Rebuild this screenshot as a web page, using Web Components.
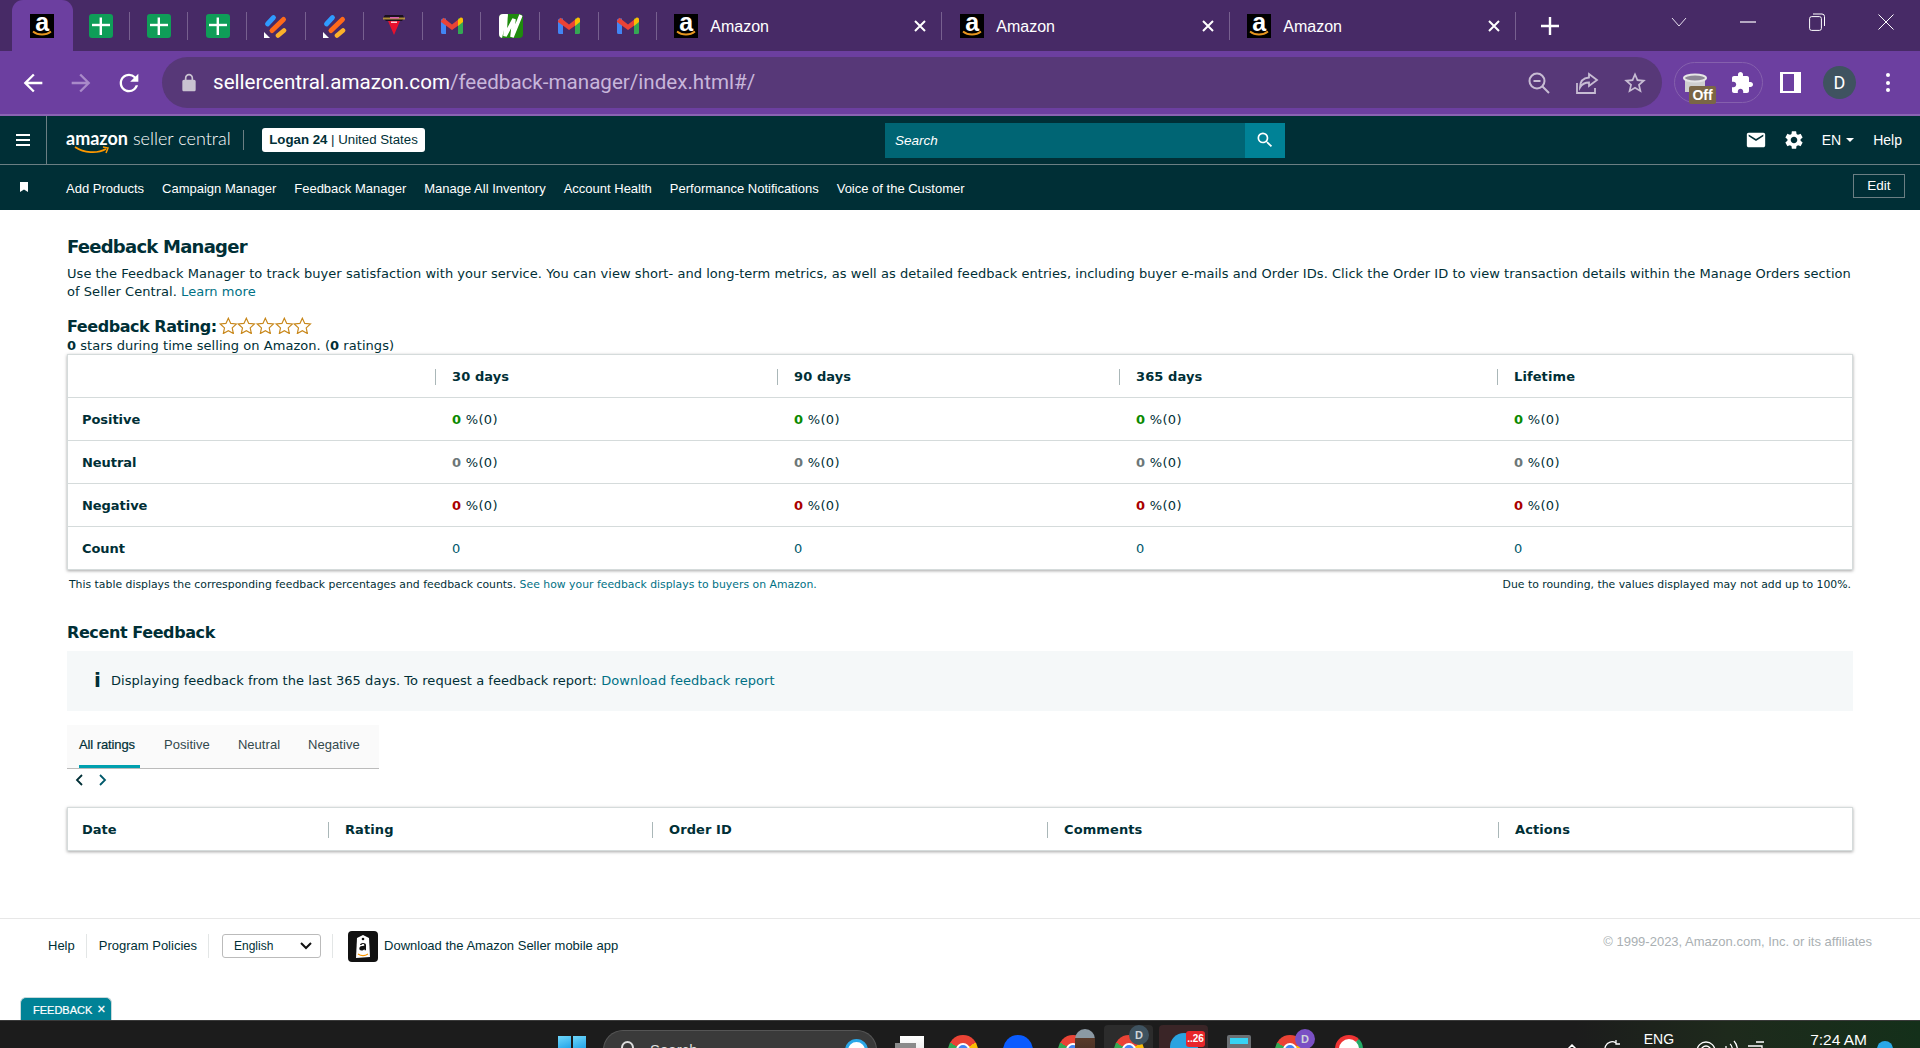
<!DOCTYPE html>
<html lang="en"><head><meta charset="utf-8"><title>Feedback Manager</title>
<style>
html,body{margin:0;padding:0;height:100%;overflow:hidden;background:#fff}
body{display:flex;flex-direction:column;width:1920px;height:1048px;font-family:"DejaVu Sans",sans-serif;color:#002f36}
</style></head><body>
<chrome-tabs></chrome-tabs>
<chrome-toolbar></chrome-toolbar>
<sc-header></sc-header>
<sc-nav></sc-nav>
<fb-page></fb-page>
<sc-footer></sc-footer>
<win-taskbar></win-taskbar>
<script>
const P={
 back:'M20 11H7.83l5.59-5.59L12 4l-8 8 8 8 1.41-1.41L7.83 13H20v-2z',
 reload:'M17.65 6.35A7.958 7.958 0 0 0 12 4c-4.42 0-7.99 3.58-7.99 8s3.57 8 7.99 8c3.73 0 6.84-2.55 7.73-6h-2.08A5.99 5.99 0 0 1 12 18c-3.31 0-6-2.69-6-6s2.69-6 6-6c1.66 0 3.14.69 4.22 1.78L13 11h7V4l-2.35 2.35z',
 lock:'M18 8h-1V6c0-2.76-2.24-5-5-5S7 3.24 7 6v2H6c-1.1 0-2 .9-2 2v10c0 1.1.9 2 2 2h12c1.1 0 2-.9 2-2V10c0-1.1-.9-2-2-2zM9 6c0-1.66 1.34-3 3-3s3 1.34 3 3v2H9V6z',
 puzzle:'M20.5 11H19V7c0-1.1-.9-2-2-2h-4V3.5C13 2.12 11.88 1 10.5 1S8 2.12 8 3.5V5H4c-1.1 0-1.99.9-1.99 2v3.8H3.5c1.49 0 2.7 1.21 2.7 2.7s-1.21 2.7-2.7 2.7H2V20c0 1.1.9 2 2 2h3.8v-1.5c0-1.49 1.21-2.7 2.7-2.7 1.49 0 2.7 1.21 2.7 2.7V22H17c1.1 0 2-.9 2-2v-4h1.5c1.38 0 2.5-1.12 2.5-2.5S21.88 11 20.5 11z',
 mail:'M20 4H4c-1.1 0-2 .9-2 2v12c0 1.1.9 2 2 2h16c1.1 0 2-.9 2-2V6c0-1.1-.9-2-2-2zm0 4l-8 5-8-5V6l8 5 8-5v2z',
 gear:'M19.14 12.94c.04-.3.06-.61.06-.94 0-.32-.02-.64-.07-.94l2.03-1.58a.49.49 0 0 0 .12-.61l-1.92-3.32a.488.488 0 0 0-.59-.22l-2.39.96c-.5-.38-1.03-.7-1.62-.94l-.36-2.54a.484.484 0 0 0-.48-.41h-3.84c-.24 0-.43.17-.47.41l-.36 2.54c-.59.24-1.13.57-1.62.94l-2.39-.96c-.22-.08-.47 0-.59.22L2.74 8.87c-.12.21-.08.47.12.61l2.03 1.58c-.05.3-.09.63-.09.94s.02.64.07.94l-2.03 1.58a.49.49 0 0 0-.12.61l1.92 3.32c.12.22.37.29.59.22l2.39-.96c.5.38 1.03.7 1.62.94l.36 2.54c.05.24.24.41.48.41h3.84c.24 0 .44-.17.47-.41l.36-2.54c.59-.24 1.13-.56 1.62-.94l2.39.96c.22.08.47 0 .59-.22l1.92-3.32c.12-.22.07-.47-.12-.61l-2.01-1.58zM12 15.6c-1.98 0-3.6-1.62-3.6-3.6s1.62-3.6 3.6-3.6 3.6 1.62 3.6 3.6-1.62 3.6-3.6 3.6z',
 search:'M15.5 14h-.79l-.28-.27A6.471 6.471 0 0 0 16 9.5 6.5 6.5 0 1 0 9.5 16c1.61 0 3.09-.59 4.23-1.57l.27.28v.79l5 4.99L20.49 19l-4.99-5zm-6 0C7.01 14 5 11.99 5 9.5S7.01 5 9.5 5 14 7.01 14 9.5 11.99 14 9.5 14z',
 star:'M22 9.24l-7.19-.62L12 2 9.19 8.63 2 9.24l5.46 4.73L5.82 21 12 17.27 18.18 21l-1.63-7.03L22 9.24zM12 15.4l-3.76 2.27 1-4.28-3.32-2.88 4.38-.38L12 6.1l1.71 4.04 4.38.38-3.32 2.88 1 4.28L12 15.4z'
};
const ic=(d,s,c,extra='')=>`<svg width="${s}" height="${s}" viewBox="0 0 24 24" fill="${c}" style="display:block;flex:none;${extra}"><path d="${d}"/></svg>`;
const fav={
 amazon:`<span style="display:block;position:relative;width:24px;height:24px;background:#000;font:bold 25px/16px 'Liberation Sans',sans-serif;color:#fff;text-align:center">a<svg width="24" height="24" viewBox="0 0 24 24" style="position:absolute;left:0;top:0"><path d="M3 17.500c5 4 13 4 18 0" fill="none" stroke="#e8961e" stroke-width="1.800"/></svg></span>`,
 sheet:`<svg width="24" height="24" viewBox="0 0 24 24" style="display:block"><rect width="24" height="24" rx="3" fill="#0f9d58"/><rect x="10.600" y="3.500" width="2.400" height="17.500" fill="#fff"/><rect x="3" y="9.800" width="18" height="2.400" fill="#fff"/></svg>`,
 jira:`<svg width="24" height="24" viewBox="0 0 24 24" style="display:block"><g stroke-linecap="round" fill="none"><path d="M3.500 10 9.500 3.500" stroke="#2f9bff" stroke-width="4.800"/><path d="M8 16.500 19.500 5.500" stroke="#ff6a1a" stroke-width="5"/><path d="M14 21.500 20 16.500" stroke="#fcb12a" stroke-width="4.600"/></g><path d="M0 18l6 6H0z" fill="#fff"/></svg>`,
 tri:`<svg width="24" height="24" viewBox="0 0 24 24" style="display:block"><path d="M3 1h18l1 3-2 3H4L1 4z" fill="#1a1020"/><path d="M1 3.500h22v2H1z" fill="#c9a23c" opacity=".85"/><path d="M8 3h9v1.500H8z" fill="#d95fb0"/><path d="M6 7h12l-6 14z" fill="#e8112d"/><path d="M9 7.500h6v1.500H9z" fill="#fff" opacity=".8"/></svg>`,
 gmail:`<svg width="24" height="24" viewBox="0 0 24 24" style="display:block"><path d="M1 6.500a2 2 0 0 1 2-2h3V20H2.500A1.500 1.500 0 0 1 1 18.500z" fill="#4285f4"/><path d="M23 6.500a2 2 0 0 0-2-2h-3V20h3.500a1.500 1.500 0 0 0 1.500-1.500z" fill="#34a853"/><path d="M1 7 3.500 3.800 12 10.500l6-4.700v6L12 16 1 8z" fill="#ea4335"/><path d="M18 5.800l2-1.800c1.500-1 3-.2 3 1.800V8l-5 4z" fill="#fbbc04"/></svg>`,
 wrike:`<svg width="24" height="24" viewBox="0 0 24 24" style="display:block"><defs><clipPath id="w"><rect width="24" height="24" rx="4"/></clipPath></defs><g clip-path="url(#w)"><rect width="24" height="24" fill="#1f8a0e"/><path d="M0 0h9L3 24H0z" fill="#fff"/><path d="M7 1 6 22 15 5l-2 18 9-22" fill="none" stroke="#fff" stroke-width="3.600"/></g></svg>`
};
class Base extends HTMLElement{
 constructor(){super();this.attachShadow({mode:'open'}).innerHTML=`<style>${this.constructor.css}</style>${this.render()}`}
 render(){return ''}
}
class ChromeTab extends Base{
 static css=`:host{display:flex;align-items:flex-start;height:51px;box-sizing:border-box;position:relative;flex:none}
 .f{margin-top:14px;height:24px;flex:none}
 :host([pinned]){width:58.6px;justify-content:center}
 :host([wide]){padding-left:17px;color:#fff;font:16px/51px "Liberation Sans",sans-serif}
 :host([sep])::after{content:"";position:absolute;right:0;top:12px;height:28px;width:1px;background:#77608f}
 :host([active]){background:#6c3fa0;border-radius:11px 11px 0 0;width:61px;margin:0 -1.400px 0 -1px;z-index:1}
 .t{margin:1px 0 0 12px;flex:1;white-space:nowrap}
 .x{margin:20px 16px 0 0}`;
 render(){const w=this.hasAttribute('wide');
  return `<span class="f">${fav[this.getAttribute('fav')]}</span>`+(w?`<span class="t">Amazon</span><svg class="x" width="12" height="12" viewBox="0 0 12 12"><path d="M1 1l10 10M11 1 1 11" stroke="#fff" stroke-width="2"/></svg>`:'')}
}
customElements.define('chrome-tab',ChromeTab);
class ChromeTabs extends Base{
 static css=`:host{display:flex;height:51px;background:#472a66;padding-left:12.700px;box-sizing:border-box;flex:none;align-items:flex-start;color:#fff}
 .plus{margin:17px 0 0 25px;flex:none}
 .wc{display:flex;margin-left:auto}
 .wc span{width:69px;height:44px;display:flex;align-items:center;justify-content:center}`;
 render(){const pins=['amazon','sheet','sheet','sheet','jira','jira','tri','gmail','wrike','gmail','gmail'];
  return pins.map((f,i)=>`<chrome-tab pinned fav="${f}" ${i==0?'active':''} ${i>0?'sep':''}></chrome-tab>`).join('')+
  `<chrome-tab wide sep fav="amazon" style="width:285px"></chrome-tab><chrome-tab wide sep fav="amazon" style="width:288px;padding-left:18px"></chrome-tab><chrome-tab wide sep fav="amazon" style="width:286px"></chrome-tab>
  <svg class="plus" width="18" height="18" viewBox="0 0 18 18"><path d="M9 0v18M0 9h18" stroke="#fff" stroke-width="2.400"/></svg>
  <div class="wc"><span><svg width="16" height="10" viewBox="0 0 16 10"><path d="M1 1l7 8 7-8" fill="none" stroke="#e7e0ef" stroke-width="1"/></svg></span>
  <span><svg width="16" height="2" viewBox="0 0 16 2"><path d="M0 1h16" stroke="#fff" stroke-width="1.200"/></svg></span>
  <span><svg width="16" height="18" viewBox="0 0 16 18"><rect x=".6" y="3.600" width="11.800" height="13.800" rx="2" fill="none" stroke="#fff"/><path d="M4 1h9a2.500 2.500 0 0 1 2.500 2.500V13" fill="none" stroke="#fff"/></svg></span>
  <span><svg width="16" height="16" viewBox="0 0 16 16"><path d="M.5.5l15 15M15.500.5l-15 15" stroke="#fff"/></svg></span></div>`}
}
customElements.define('chrome-tabs',ChromeTabs);
class ChromeToolbar extends Base{
 static css=`:host{display:flex;align-items:center;height:65px;box-sizing:border-box;background:#6c3fa0;border-bottom:2px solid #8a63b3;flex:none}
 .nav{display:flex;margin:0 19px;gap:20px}
 .bar{width:1500px;height:51px;border-radius:26px;background:#573878;display:flex;align-items:center;box-sizing:border-box;padding-left:17px;flex:none}
 .url{margin-left:14px;font:20.600px/51px "Roboto",sans-serif;color:#fff;white-space:nowrap}
 .url i{font-style:normal;color:#c8b6db}
 .r{margin-left:auto;display:flex;gap:24px;padding-right:15px}
 .ext{width:89px;height:41px;box-sizing:border-box;border:1px solid #8560ad;border-radius:21px;margin-left:12px;display:flex;align-items:center;position:relative;flex:none}
 .cup{margin-left:7px}
 .off{position:absolute;left:14px;top:23px;width:27px;height:18px;background:#7a6645;color:#fff;border-radius:2px;font:bold 14px/19px "Liberation Sans",sans-serif;text-align:center}
 .pz{margin-left:auto;margin-right:8px}
 .panel{margin-left:17px;width:21px;height:21px;box-sizing:border-box;background:#fff;border:solid #fff;border-width:2px 7px 2px 3px;flex:none}
 .panel::after{content:"";display:block;width:100%;height:100%;background:#6c3fa0}
 .av{width:33px;height:33px;border-radius:50%;background:#3f5360;color:#fff;font:18px/33px "Roboto",sans-serif;text-align:center;margin-left:22px;flex:none}
 .dots{display:flex;flex-direction:column;gap:3.500px;margin-left:30px}
 .dots b{display:block;width:4px;height:4px;border-radius:50%;background:#fff}`;
 render(){return `<div class="nav">${ic(P.back,28,'#fff')}${ic(P.back,28,'#a98ac9','transform:scaleX(-1)')}${ic(P.reload,28,'#fff')}</div>
 <div class="bar">${ic(P.lock,20,'#c9c3d1')}<span class="url">sellercentral.amazon.com<i>/feedback-manager/index.html#/</i></span>
 <div class="r"><svg width="24" height="24" viewBox="0 0 24 24" fill="none" stroke="#c7bcd3" stroke-width="2"><circle cx="10" cy="10" r="7.500"/><path d="M6.500 10h7M15.500 15.500 22 22"/></svg>
 <svg width="24" height="24" viewBox="0 0 24 24" fill="none" stroke="#c7bcd3" stroke-width="1.800"><path d="M2 12v10h18v-5M14 3l8 6-8 6v-3.500c-4 0-7 1.500-9 5 0-5.500 3-9.500 9-10z"/></svg>
 ${ic(P.star,26,'#c7bcd3','margin:-1px')}</div></div>
 <div class="ext"><svg class="cup" width="26" height="24" viewBox="0 0 26 24"><path d="M3 7v14h20V7" fill="#cfcfcf"/><ellipse cx="13" cy="7" rx="11" ry="3.500" fill="#8d8796" stroke="#e6e6e6" stroke-width="2"/></svg><span class="off">Off</span><span class="pz">${ic(P.puzzle,24,'#fff')}</span></div>
 <div class="panel"></div><div class="av">D</div><div class="dots"><b></b><b></b><b></b></div>`}
}
customElements.define('chrome-toolbar',ChromeToolbar);
class ScHeader extends Base{
 static css=`:host{display:flex;align-items:center;height:49px;box-sizing:border-box;background:#002f36;border-bottom:1px solid #6b7f83;flex:none;color:#fff;font-family:"Liberation Sans",sans-serif}
 .ham{width:47px;height:48px;box-sizing:border-box;border-right:1px solid #6b7f83;display:flex;flex-direction:column;gap:3px;align-items:center;justify-content:center;flex:none}
 .ham b{display:block;width:14px;height:2px;background:#fff}
 .logo{margin-left:19px;width:160px;position:relative;height:32px;flex:none;white-space:nowrap;font:18px/28px "Lato",sans-serif}
 .logo b{letter-spacing:0}.logo span{margin-left:5px;font-weight:300;color:#fff}
 .logo svg{position:absolute;left:8px;top:22px}
 .sep{width:1px;height:20px;background:#6b7f83;margin:0 18px 0 17px;flex:none}
 .acct{width:163px;height:24px;box-sizing:border-box;background:#fff;color:#002f36;border-radius:3px;font:13.250px/23px "Liberation Sans",sans-serif;text-align:center;white-space:nowrap;flex:none;margin-top:-1px}
 .acct b{font-weight:bold}
 .search{display:flex;height:35px;width:400px;margin-left:460px;flex:none;background:#006574}
 .search i{flex:1;font:italic 13.500px/35px "Liberation Sans",sans-serif;padding-left:10px;color:#fff}
 .search span{width:40px;background:#008296;display:flex;align-items:center;justify-content:center}
 .r{margin-left:auto;display:flex;align-items:center;font-size:14px}
 .en{margin-left:17px;display:flex;align-items:center;gap:5px}
 .en u{display:block;width:0;height:0;border:4px solid transparent;border-top:4px solid #fff;border-bottom:0}
 .help{margin:0 18px 0 19px}`;
 render(){return `<div class="ham"><b></b><b></b><b></b></div>
 <div class="logo"><b>amazon</b><span>seller central</span><svg width="36" height="9" viewBox="0 0 36 9"><path d="M1 1c9 6 22 7 31 2" fill="none" stroke="#f90" stroke-width="1.800"/><path d="M29 1l5 1-2 5" fill="none" stroke="#f90" stroke-width="1.500"/></svg></div>
 <div class="sep"></div><div class="acct"><b>Logan 24</b> | United States</div>
 <div class="search"><i>Search</i><span>${ic(P.search,20,'#fff')}</span></div>
 <div class="r">${ic(P.mail,22,'#fff')}<span style="width:16px"></span>${ic(P.gear,22,'#fff')}<span class="en">EN <u></u></span><span class="help">Help</span></div>`}
}
customElements.define('sc-header',ScHeader);
class ScNav extends Base{
 static css=`:host{display:flex;align-items:center;height:45px;box-sizing:border-box;background:#002f36;flex:none;color:#fff;font:13px "Liberation Sans",sans-serif}
 .bk{width:8px;height:10px;margin:0 38px 2px 20px;flex:none}
 .links{display:flex;gap:18px;white-space:nowrap;margin-top:1px}
 .edit{margin-left:auto;margin-right:15px;width:52px;height:24px;box-sizing:border-box;border:1px solid #6b7f83;text-align:center;font-size:13.500px;line-height:21px;margin-top:-3px}`;
 render(){return `<svg class="bk" viewBox="0 0 8 10"><path d="M0 0h8v10L4 7.500 0 10z" fill="#fff"/></svg><div class="links">${['Add Products','Campaign Manager','Feedback Manager','Manage All Inventory','Account Health','Performance Notifications','Voice of the Customer'].map(t=>`<span>${t}</span>`).join('')}</div><div class="edit">Edit</div>`}
}
customElements.define('sc-nav',ScNav);
class FbTable extends Base{
 static css=`:host{display:block;box-sizing:border-box;background:#fff;border:1px solid #d5dbdb;box-shadow:0 1px 3px 0 rgba(0,0,0,.35);font:13px "DejaVu Sans",sans-serif;color:#002f36}
 .r{display:grid;height:43px;align-items:center;border-bottom:1px solid #d5dbdb;box-sizing:border-box}
 .r:last-child{border-bottom:0;height:42px}
 .c{padding-left:15px;white-space:nowrap;position:relative;letter-spacing:.3px}
 .h{font-weight:bold;letter-spacing:.1px}
 .h.s::before{content:"";position:absolute;left:-2px;top:0;height:16px;width:1px;background:#aab7b8}
 .c:first-child{padding-left:14px;letter-spacing:-.05px}
 .c b.g{color:#0a8a00}.c b.n{color:#6c7778}.c b.d{color:#a00}
 .cnt{color:#00596b}`;
 render(){
  const cols=this.getAttribute('cols');
  const rows=JSON.parse(this.getAttribute('rows'));
  return rows.map((r,ri)=>`<div class="r" style="grid-template-columns:${cols}">${r.map((c,i)=>`<div class="c ${ri==0||i==0?'h':''} ${ri==0&&i>0?'s':''}">${c}</div>`).join('')}</div>`).join('')}
}
customElements.define('fb-table',FbTable);
class FbTabs extends Base{
 static css=`:host{display:flex;width:312px;height:44px;box-sizing:border-box;background:#fafafa;border-bottom:1px solid #bbb;font:13px "Liberation Sans",sans-serif;color:#002f36}
 span{height:43px;line-height:39px;margin-left:12px;padding:0 4px 0 0;box-sizing:border-box;white-space:nowrap;color:#33494d}
 span.a{color:#002f36;border-bottom:3px solid #00a0af;margin-right:12px;padding-right:5px;letter-spacing:-.1px;-webkit-text-stroke:.2px #002f36}
 span+span{margin-right:12px}`;
 render(){return `<span class="a">All ratings</span><span>Positive</span><span>Neutral</span><span>Negative</span>`}
}
customElements.define('fb-tabs',FbTabs);
class FbPage extends Base{
 static css=`:host{display:block;flex:1;min-height:0;padding:25px 67px 0;box-sizing:border-box;font:13px/18px "DejaVu Sans",sans-serif;letter-spacing:.045px;color:#002f36;background:#fff}
 a{color:#007185;text-decoration:none}
 h1{margin:0 0 6px;font:bold 18px/24px "DejaVu Sans",sans-serif;letter-spacing:-.75px}
 p{margin:0}
 .rate{margin-top:15px;display:flex;align-items:flex-start;height:21px;font:bold 16px/21px "DejaVu Sans",sans-serif;letter-spacing:-.45px}
 .stars{display:flex;margin-left:2px;margin-top:1px}
 .stars svg{display:block;flex:none;width:18.700px}
 fb-table.top{margin-top:-1px}
 .note{display:flex;justify-content:space-between;font-size:10.850px;line-height:16px;padding:0 2px;margin-top:7px;letter-spacing:0}
 h2{margin:29px 0 7px;font:bold 16px/22px "DejaVu Sans",sans-serif;letter-spacing:-.4px}
 .info{height:60px;background:#f5f8f9;display:flex;align-items:center;padding-left:27px}
 .info b{font:bold 20px/20px "DejaVu Sans",sans-serif;color:#002f36;width:17px;flex:none;margin-top:-3px}
 .pg{display:flex;gap:16px;padding-left:8px;margin:3px 0 19px;height:16px;align-items:center}
 fb-tabs{margin-top:14px}`;
 render(){
  const stat=[ '<b class="g">0</b> %(0)', '<b class="n">0</b> %(0)', '<b class="d">0</b> %(0)'];
  const rows=[['','30 days','90 days','365 days','Lifetime'],
   ['Positive',...Array(4).fill(stat[0])],['Neutral',...Array(4).fill(stat[1])],['Negative',...Array(4).fill(stat[2])],
   ['Count',...Array(4).fill('<span class=cnt>0</span>')]];
  const rows2=[['Date','Rating','Order ID','Comments','Actions']];
  const esc=s=>JSON.stringify(s).replace(/"/g,'&quot;');
  const star=`<svg width="19" height="17" viewBox="0 0 24 22"><path d="M12 1.500l3.100 6.800 7.400.8-5.500 5 1.500 7.300L12 17.800l-6.500 3.600L7 14.100l-5.500-5 7.400-.8z" fill="#fff" stroke="#c8871a" stroke-width="1.500"/></svg>`;
  return `<h1>Feedback Manager</h1>
  <p>Use the Feedback Manager to track buyer satisfaction with your service. You can view short- and long-term metrics, as well as detailed feedback entries, including buyer e-mails and Order IDs. Click the Order ID to view transaction details within the Manage Orders section of Seller Central. <a>Learn more</a></p>
  <div class="rate"><span>Feedback Rating:</span><span class="stars">${star.repeat(5)}</span></div>
  <p><b>0</b> stars during time selling on Amazon. (<b>0</b> ratings)</p>
  <fb-table class="top" cols="369px 342px 342px 378px 1fr" rows="${esc(rows)}"></fb-table>
  <div class="note"><span>This table displays the corresponding feedback percentages and feedback counts. <a>See how your feedback displays to buyers on Amazon.</a></span><span>Due to rounding, the values displayed may not add up to 100%.</span></div>
  <h2>Recent Feedback</h2>
  <div class="info"><b>i</b><span>Displaying feedback from the last 365 days. To request a feedback report: <a>Download feedback report</a></span></div>
  <fb-tabs></fb-tabs>
  <div class="pg"><svg width="8" height="12" viewBox="0 0 8 12"><path d="M7 1 2 6l5 5" fill="none" stroke="#002f36" stroke-width="1.800"/></svg><svg width="8" height="12" viewBox="0 0 8 12"><path d="M1 1l5 5-5 5" fill="none" stroke="#00596b" stroke-width="1.800"/></svg></div>
  <fb-table cols="262px 324px 395px 451px 1fr" rows="${esc(rows2)}"></fb-table>`}
}
customElements.define('fb-page',FbPage);
class ScFooter extends Base{
 static css=`:host{display:flex;align-items:flex-start;height:102px;box-sizing:border-box;border-top:1px solid #e7e7e7;padding:14px 48px 0 48px;flex:none;font:13px/26px "Liberation Sans",sans-serif;color:#002f36;position:relative;background:#fff}
 .sep{width:1px;height:24px;background:#e3e6e6;margin:1px 12px 0 11px;flex:none}
 .sel{width:99px;height:24px;box-sizing:border-box;border:1px solid #bbb;border-radius:3px;margin:1px 0 0 1px;padding:0 8px 0 11px;display:flex;align-items:center;justify-content:space-between;line-height:22px;flex:none;font-size:12px}
 .app{width:30px;height:31px;background:#111;border-radius:4px;margin:-2px 6px 0 15px;flex:none}
 .copy{margin-left:auto;color:#aab0b3;font-size:13px;line-height:20px;margin-top:-1px}
 .tag{position:absolute;left:20px;bottom:0;width:92px;height:23px;box-sizing:border-box;background:#008296;border-radius:6px 6px 0 0;color:#fff;font:11px/24px "Liberation Sans",sans-serif;padding-left:12px;white-space:nowrap;border:1px solid #c8d8da;border-bottom:0;-webkit-text-stroke:.2px #fff}
 .tag i{font:14px/14px "Liberation Sans",sans-serif;margin-left:2px}`;
 render(){return `<span>Help</span><div class="sep"></div><span>Program Policies</span><div class="sep"></div>
 <div class="sel"><span>English</span><svg width="12" height="8" viewBox="0 0 12 8"><path d="M1 1l5 5 5-5" fill="none" stroke="#111" stroke-width="2"/></svg></div><div class="sep" style="margin-left:11px;margin-right:0"></div>
 <svg class="app" viewBox="0 0 30 31"><path d="M9 7l6-3 6 3 1 19-14 1z" fill="#fff"/><circle cx="15" cy="8" r="1.300" fill="#111"/><path d="M10 23c3 2 7 2 10 0" fill="none" stroke="#f90" stroke-width="1.300"/><path d="M15 12c-2 0-3 1-3 2h1.500c.2-.6.7-.9 1.500-.9s1.300.4 1.300 1.100v.6c-3 0-5 .6-5 2.700 0 1.200.8 2 2.200 2 1.200 0 2-.5 2.900-1.300l.3 1.100H18v-5c0-1.600-1-2.300-3-2.300z" fill="#111"/></svg>
 <span>Download the Amazon Seller mobile app</span><span class="copy">© 1999-2023, Amazon.com, Inc. or its affiliates</span>
 <div class="tag">FEEDBACK <i>×</i></div>`}
}
customElements.define('sc-footer',ScFooter);
class WinTaskbar extends Base{
 static css=`:host{display:flex;height:28px;box-sizing:border-box;flex:none;overflow:hidden;background:linear-gradient(90deg,#1c1c1c 0,#1c1c1c 82%,#1e2a1c 90%,#14301a 100%);border-top:1px solid #3a3a3a;color:#fff;font:14px "Liberation Sans",sans-serif;position:relative}
 .win{margin:15px 0 0 558px;width:28px;height:28px;flex:none;display:grid;grid-template-columns:1fr 1fr;gap:2px}
 .win b{background:linear-gradient(160deg,#6fd7fb,#1fa2e8);height:13px}
 .srch{margin:9px 0 0 17px;width:274px;height:40px;box-sizing:border-box;border-radius:20px;background:#3a3a3a;border:1px solid #555;border-bottom:0;display:flex;padding-left:14px;flex:none;position:relative;color:#ddd;line-height:38px;font-size:15px}
 .srch svg{margin:7px 8px 0 0}
 .bing{position:absolute;right:8px;top:8px;width:23px;height:23px;border-radius:50%;background:#fff;border:3px solid #2aa7e8;box-sizing:border-box}
 .cell{position:relative;flex:none;width:30px;height:40px}
 .chrome{position:absolute;left:0;top:14px;width:30px;height:30px;border-radius:50%;background:conic-gradient(from -60deg,#ea4335 0 33.3%,#fbbc04 33.3% 66.6%,#34a853 66.6%)}
 .chrome::after{content:"";position:absolute;left:8px;top:8px;width:14px;height:14px;border-radius:50%;background:#4285f4;border:2px solid #fff;box-sizing:border-box}
 .hi{width:49px;height:40px;border-radius:4px 4px 0 0;flex:none;margin-top:4px;position:relative}
 .dot{position:absolute;border-radius:50%;font:bold 11px/20px "Liberation Sans",sans-serif;text-align:center;color:#cfd4d8;width:20px;height:20px;top:8px}
 .r{margin-left:auto;display:flex;flex:none}
 .eng{margin:10px 0 0 0;font-size:14px;line-height:17px}
 .time{font-size:15.500px;line-height:17px;margin:10px 0 0 46px}`;
 render(){
  const sp=w=>`<span style="width:${w}px;flex:none"></span>`;
  return `<div class="win"><b></b><b></b><b></b><b></b></div>
  <div class="srch">${ic(P.search,24,'#ddd')}<span>Search</span><span class="bing"></span></div>
  ${sp(19)}<span class="cell"><span style="position:absolute;left:4px;top:15px;width:24px;height:26px;background:linear-gradient(#fff,#ddd)"></span><span style="position:absolute;left:-1px;top:22px;width:21px;height:20px;background:#8a8a8a"></span></span>
  ${sp(22)}<span class="cell"><span class="chrome"></span></span>
  ${sp(25)}<span class="cell"><span style="position:absolute;left:0;top:14px;width:30px;height:30px;border-radius:50%;background:#0a5cff"></span></span>
  ${sp(25)}<span class="cell"><span class="chrome"></span><span class="dot" style="left:17px;width:20px;height:34px;border-radius:10px;background:linear-gradient(#8b99a3 0,#8b99a3 25%,#5a3a2a 26%,#3a2a22)"></span></span>
  ${sp(16)}<span class="hi" style="background:#2c2c2c"><span class="chrome" style="left:10px;top:10px"></span><span class="dot" style="left:25px;top:0;background:#3f5360">D</span></span>
  ${sp(6)}<span class="hi" style="background:#3a2527"><span style="position:absolute;left:11px;top:8px;width:28px;height:28px;border-radius:50%;background:#2aa3e0"></span><span style="position:absolute;left:27px;top:6px;width:19px;height:16px;background:#e8262a;border-radius:3px;color:#fff;font:bold 10px/15px 'Liberation Sans',sans-serif;text-align:center">..26</span></span>
  ${sp(16)}<span class="cell"><span style="position:absolute;left:3px;top:14px;width:24px;height:30px;background:#6b6f73;padding:3px;box-sizing:border-box;border-radius:2px"><span style="display:block;height:6px;background:#35d4f5"></span></span></span>
  ${sp(21)}<span class="cell"><span class="chrome"></span><span class="dot" style="left:20px;background:#7a50c4">D</span></span>
  ${sp(29)}<span class="cell"><span style="position:absolute;left:1px;top:14px;width:28px;height:28px;border-radius:50%;background:#fff;border:4px solid;border-color:#e33 #2a6 #2a6 #e33;box-sizing:border-box"></span></span>
  <div class="r">
   <svg style="margin:23px 23px 0 0" width="14" height="8" viewBox="0 0 14 8"><path d="M1 7l6-6 6 6" fill="none" stroke="#fff" stroke-width="1.500"/></svg>
   <svg style="margin:18px 22px 0 0" width="20" height="20" viewBox="0 0 20 20"><path d="M17 10a7 7 0 1 1-3-6M14 1v4h4" fill="none" stroke="#fff" stroke-width="1.300"/></svg>
   <span class="eng">ENG</span>
   <svg style="margin:17px 0 0 22px" width="68" height="24" viewBox="0 0 68 24" fill="none" stroke="#fff" stroke-width="1.300"><circle cx="10" cy="13" r="9"/><circle cx="10" cy="13" r="5"/><path d="M30 8v14M34 6c3 2 3 8 3 12M38 3c3 3 4 7 4 15M60 4h8M52 8h14v14"/></svg>
   <span class="time">7:24 AM</span><span style="width:16px;height:16px;border-radius:50%;background:#29a8e8;margin:20px 27px 0 10px;flex:none"></span>
  </div>`}
}
customElements.define('win-taskbar',WinTaskbar);
</script>
</body></html>
